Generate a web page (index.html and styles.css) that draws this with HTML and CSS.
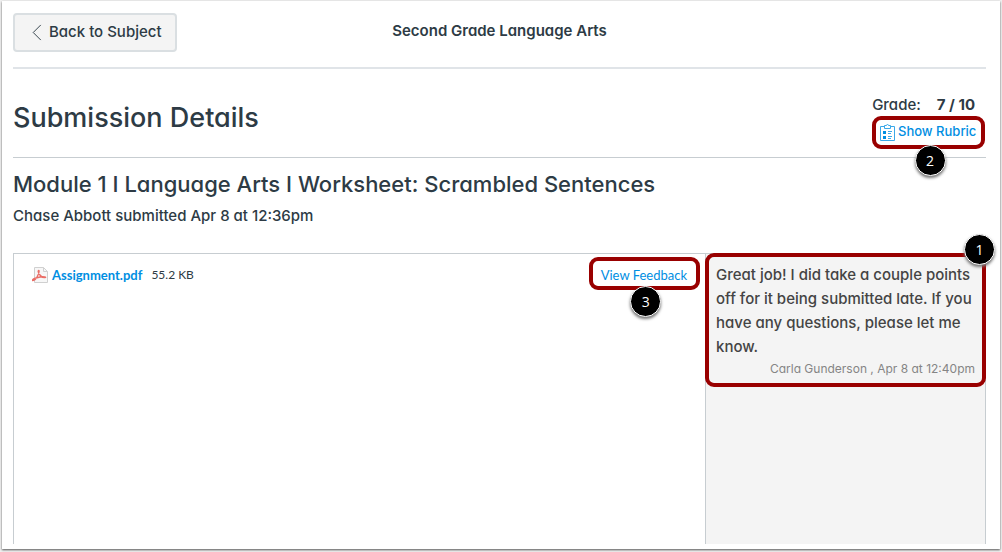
FILE: index.html
```
<!DOCTYPE html>
<html lang="en">
<head>
<meta charset="utf-8">
<meta name="viewport" content="width=device-width, initial-scale=1">
<title>Submission Details</title>
<link rel="stylesheet" href="styles.css">
</head>
<body>
<div class="page">
  <header class="topbar">
    <button type="button" class="back">
      <svg class="back-icon" viewBox="0 0 10 18" aria-hidden="true"><path d="M9 1 1 9l8 8"/></svg>
      Back to Subject
    </button>
    <div class="subject">Second Grade Language Arts</div>
  </header>
  <section class="heading">
    <h1>Submission Details</h1>
    <div class="summary">
      <div class="grade">Grade: <strong>7 / 10</strong></div>
      <div class="callout callout-rubric">
        <a class="rubric-link" href="#rubric">
          <svg class="rubric-icon" viewBox="0 0 15 17" aria-hidden="true">
            <path class="line" d="M4.500 2.500h-4v14h14v-14h-4M4.500 4.500v-3h2q0-1 1-1t1 1h2v3zM8 7.500h4M8 9.500h3M8 12.500h4M8 14.500h3"/>
            <path class="fill" d="M3 7h3v3H3zM3 12h3v3H3z"/>
          </svg>Show Rubric</a>
        <span class="badge">2</span>
      </div>
    </div>
  </section>
  <h2>Module 1 I Language Arts I Worksheet: Scrambled Sentences</h2>
  <p class="submitted">Chase Abbott submitted Apr 8 at 12:36pm</p>
  <main class="submission">
    <div class="files">
      <div class="file">
        <svg class="pdf-icon" viewBox="0 0 16 16" aria-hidden="true">
          <path class="sheet" d="M2.500.5h9l4 4v11h-13z"/>
          <path class="fold" d="M11.500.5v4h4"/>
          <path class="mark" d="M.5 13.500c2 .2 4.500-3 5.700-6C7.200 5 7.400 3.500 6.700 3.500s-1 1.500.8 4 3.500 3.300 5.500 3.100-1-1.300-5-.6S.1 12 .5 13.500z"/>
        </svg>
        <a class="file-name" href="#assignment">Assignment.pdf</a>
        <span class="file-size">55.2 KB</span>
      </div>
      <div class="callout callout-feedback">
        <a href="#feedback">View Feedback</a>
        <span class="badge">3</span>
      </div>
    </div>
    <aside class="comments">
      <div class="callout callout-comment">
        <p class="comment">Great job! I did take a couple points off for it being submitted late. If you have any questions, please let me know.</p>
        <p class="author">Carla Gunderson , Apr 8 at 12:40pm</p>
        <span class="badge badge-corner">1</span>
      </div>
    </aside>
  </main>
</div>
</body>
</html>
```
FILE: styles.css
```
* {
  box-sizing: border-box;
}

body {
  display: flex;
  min-height: 100vh;
  margin: 0;
  padding: 1px 2px 3px;
  background: #f0f0f0;
  color: #2d3b45;
  font-family: Inter, "Noto Sans", sans-serif;
  font-feature-settings: "cv11";
  font-size: 15px;
  font-weight: 500;
}

h1,
h2,
p {
  margin: 0;
  font-weight: 500;
}

a {
  color: #008ee2;
  text-decoration: none;
}

.page {
  display: flex;
  flex: 1;
  flex-direction: column;
  padding: 12px 14px 5px 11px;
  background: #fff;
  box-shadow: 0 1px 2px #555;
}

.topbar {
  display: grid;
  grid-template-columns: 1fr auto 1fr;
  align-items: start;
  padding-bottom: 15px;
  border-bottom: 2px solid #e0e4e8;
}

.back {
  display: flex;
  align-items: center;
  justify-self: start;
  gap: 7px;
  height: 39px;
  padding: 0 13px 3px 17px;
  border: 2px solid #dadfe2;
  border-radius: 4px;
  background: #f4f4f4;
  color: inherit;
  font: inherit;
  font-feature-settings: inherit;
}

.back-icon {
  width: 10px;
  height: 17px;
  margin-top: 3px;
  fill: none;
  stroke: #2d3b45;
}

.subject {
  line-height: 36px;
  font-weight: 600;
}

.heading {
  display: flex;
  align-items: flex-start;
  justify-content: space-between;
  padding-top: 25px;
  border-bottom: 1px solid #c7cdd1;
}

h1 {
  padding-top: 6px;
  font-size: 27px;
  line-height: 36px;
}

.grade {
  padding-right: 11px;
  line-height: 22px;
  text-align: right;
}

.grade strong {
  margin-left: 12px;
  font-weight: 700;
}

.callout {
  position: relative;
  border: 4px solid #900;
  border-radius: 9px;
}

.callout-rubric {
  width: 113px;
  height: 33px;
  margin-right: 1px;
  margin-bottom: 8px;
  padding: 0 4px;
}

.rubric-link {
  display: flex;
  align-items: center;
  gap: 3px;
  font-size: 13px;
  line-height: 22px;
  white-space: nowrap;
}

.rubric-icon {
  flex: none;
  width: 15px;
  height: 17px;
  margin-top: 2px;
}

.line {
  fill: none;
  stroke: #3ba8e8;
}

.fill {
  fill: #008ee2;
}

.badge {
  position: absolute;
  z-index: 1;
  top: 25px;
  left: calc(50% - 14px);
  width: 31px;
  height: 31px;
  border: 1px solid #fff;
  border-radius: 50%;
  background: #000;
  box-shadow: 0 2px 3px #777;
  color: #fff;
  font-family: "Open Sans", sans-serif;
  font-size: 14px;
  font-weight: 400;
  line-height: 29px;
  text-align: center;
}

.badge-corner {
  top: -23px;
  right: -13px;
  left: auto;
}

h2 {
  padding-top: 10px;
  font-size: 22px;
  line-height: 32px;
}

.submitted {
  padding-top: 4px;
  line-height: 24px;
}

.submission {
  display: grid;
  flex: 1;
  grid-template-columns: 1fr 281px;
  margin-top: 25px;
}

.files {
  display: flex;
  align-items: flex-start;
  justify-content: space-between;
  padding: 3px 5px 0 18px;
  border-top: 1px solid #c7cdd1;
  border-left: 1px solid #c7cdd1;
  font-family: Lato, sans-serif;
  font-size: 13px;
  font-weight: 400;
}

.file {
  display: flex;
  align-items: center;
  padding-top: 8px;
  line-height: 20px;
}

.pdf-icon {
  width: 16px;
  height: 16px;
  margin-right: 4px;
}

.sheet {
  fill: #f7f7f7;
  stroke: #d0d0d0;
}

.fold {
  fill: none;
  stroke: #d0d0d0;
}

.mark {
  fill: none;
  stroke: #ea6d66;
  stroke-width: 1.3;
}

.file-name {
  font-weight: 700;
}

.file-size {
  margin-left: 9px;
  font-size: 12px;
}

.callout-feedback {
  height: 33px;
  padding: 0 9px 0 8px;
  line-height: 28px;
}

.comments {
  border: 1px solid #c7cdd1;
  border-bottom: 0;
  background: #f4f4f4;
}

.callout-comment {
  margin: -1px;
  padding: 6px 7px 4px;
  color: #444;
}

.comment {
  line-height: 24px;
}

.author {
  color: #858585;
  font-size: 12px;
  font-weight: 400;
  line-height: 20px;
  text-align: right;
}
```
